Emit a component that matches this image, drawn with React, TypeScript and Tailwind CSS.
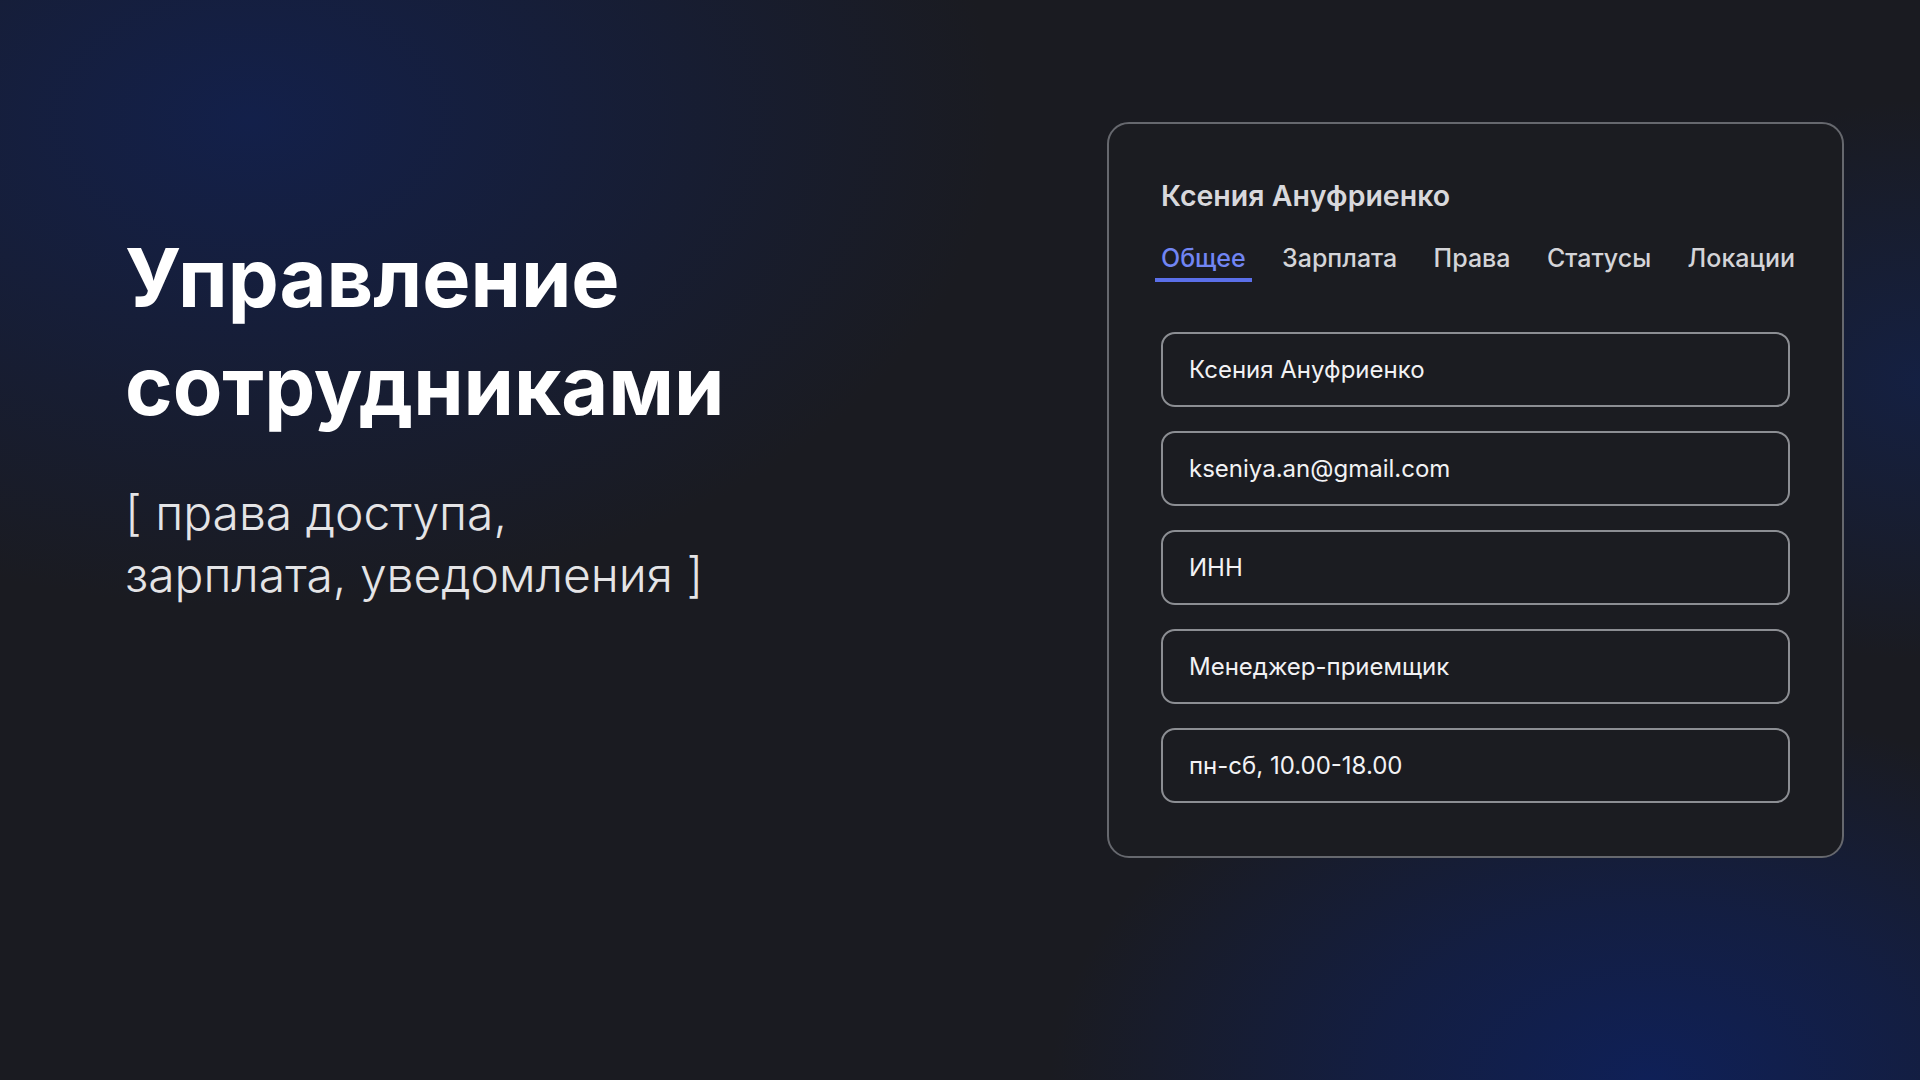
import React from "react";

const tabs = ["Общее", "Зарплата", "Права", "Статусы", "Локации"];
const fields = [
  "Ксения Ануфриенко",
  "kseniya.an@gmail.com",
  "ИНН",
  "Менеджер-приемщик",
  "пн-сб, 10.00-18.00",
];

export default function App() {
  return (
    <div
      className="w-[1920px] h-[1080px] overflow-hidden flex bg-[#1a1b21] bg-[radial-gradient(ellipse_1000px_650px_at_250px_120px,#13204a_0%,rgba(19,32,74,0.55)_35%,rgba(26,27,33,0)_75%),radial-gradient(ellipse_800px_500px_at_1650px_1080px,#0f2057_0%,rgba(15,32,87,0.6)_35%,rgba(26,27,33,0)_75%),radial-gradient(ellipse_500px_400px_at_1920px_380px,rgba(18,34,80,0.7)_0%,rgba(26,27,33,0)_70%)]"
      style={{ fontFamily: "Inter, 'Noto Sans', sans-serif" }}
    >
      <div className="pl-[125px] pt-[224px] flex flex-col">
        <h1 className="text-[81px] leading-[108px] font-bold text-white">
          Управление
          <br />
          сотрудниками
        </h1>
        <p className="mt-[42px] text-[48px] leading-[62px] font-light text-[#e4e4e6]">
          [ права доступа,
          <br />
          зарплата, уведомления ]
        </p>
      </div>

      <div className="ml-auto mr-[76px] mt-[122px] w-[737px] h-[736px] rounded-[22px] border-2 border-[#66686e] bg-[#1b1c21] pt-[55px] px-[52px] pb-[53px] flex flex-col">
        <div className="text-[28.5px] leading-[34px] font-semibold text-[#d8d8dc]">
          Ксения Ануфриенко
        </div>
        <div className="mt-[30px] -ml-[6px] -mr-[11px] flex justify-between">
          {tabs.map((t, i) => (
            <div
              key={t}
              className={
                i === 0
                  ? "px-[6px] pb-[5px] border-b-4 border-[#5b6fe9] text-[25px] leading-[30px] font-medium text-[#7185f3]"
                  : "px-[6px] pb-[5px] border-b-4 border-transparent text-[25px] leading-[30px] font-medium text-[#d4d4d8]"
              }
            >
              {t}
            </div>
          ))}
        </div>
        <div className="mt-[50px] flex flex-col gap-[24px]">
          {fields.map((f) => (
            <div
              key={f}
              className="h-[75px] rounded-[14px] border-2 border-[#8c8e93] px-[26px] flex items-center text-[24px] text-[#f2f2f4]"
            >
              {f}
            </div>
          ))}
        </div>
      </div>
    </div>
  );
}
